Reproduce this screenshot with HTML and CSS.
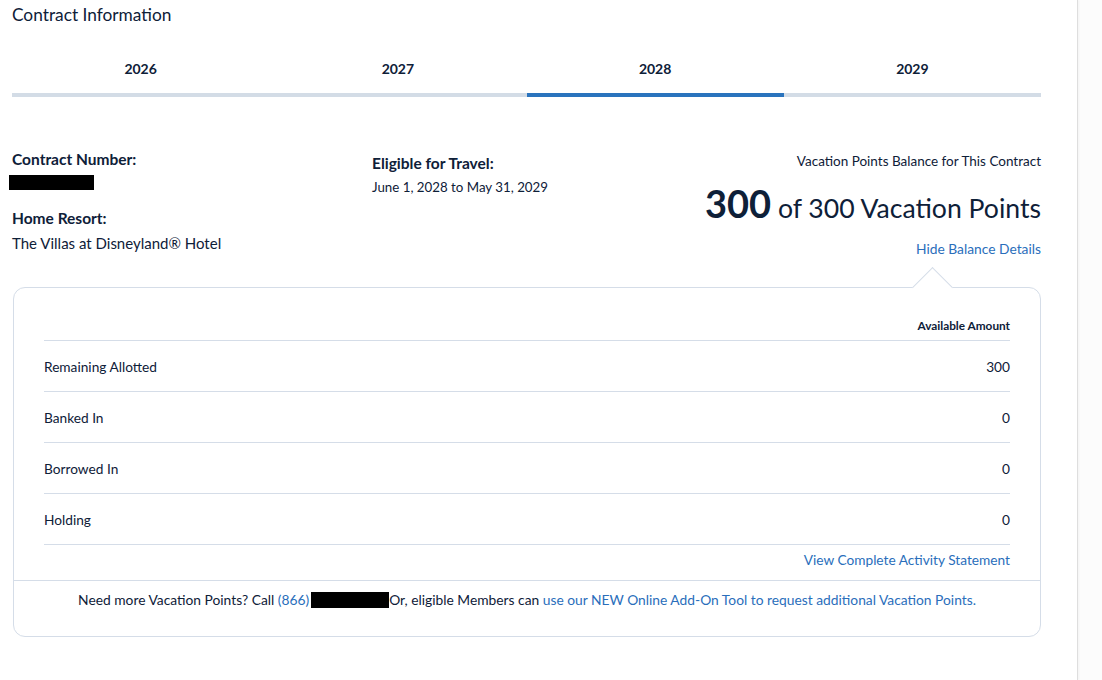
FILE: index.html
```html
<!DOCTYPE html>
<html lang="en">
<head>
<meta charset="utf-8">
<title>Contract Information</title>
<link rel="stylesheet" href="styles.css">
</head>
<body>
<main class="page">
  <h1 class="page-title">Contract Information</h1>

  <nav class="year-tabs">
    <a class="year-tab" href="#">2026</a>
    <a class="year-tab" href="#">2027</a>
    <a class="year-tab is-active" href="#">2028</a>
    <a class="year-tab" href="#">2029</a>
  </nav>

  <section class="contract-summary">
    <div class="summary-col">
      <h2 class="field-label">Contract Number:</h2>
      <div class="redacted redacted-contract"></div>
      <h2 class="field-label field-label-spaced">Home Resort:</h2>
      <p class="field-value">The Villas at Disneyland® Hotel</p>
    </div>
    <div class="summary-col summary-col-travel">
      <h2 class="field-label">Eligible for Travel:</h2>
      <p class="field-value field-value-date">June 1, 2028 to May 31, 2029</p>
    </div>
    <div class="summary-col balance">
      <p class="balance-caption">Vacation Points Balance for This Contract</p>
      <p class="balance-total"><strong>300</strong> of 300 Vacation Points</p>
      <a class="link balance-toggle" href="#">Hide Balance Details</a>
    </div>
  </section>

  <section class="balance-panel">
    <div class="balance-table">
      <div class="balance-head">Available Amount</div>
      <div class="balance-row"><span>Remaining Allotted</span><span class="amount">300</span></div>
      <div class="balance-row"><span>Banked In</span><span class="amount">0</span></div>
      <div class="balance-row"><span>Borrowed In</span><span class="amount">0</span></div>
      <div class="balance-row"><span>Holding</span><span class="amount">0</span></div>
      <div class="statement-link"><a class="link" href="#">View Complete Activity Statement</a></div>
    </div>
    <p class="panel-footer">Need more Vacation Points? Call <a class="link" href="#">(866)</a><span class="redacted redacted-phone"></span>Or, eligible Members can <a class="link" href="#">use our NEW Online Add-On Tool to request additional Vacation Points.</a></p>
  </section>
</main>
</body>
</html>
```

FILE: styles.css
```css
* {
  box-sizing: border-box;
}

html, body {
  margin: 0;
  padding: 0;
}

body {
  background: #fcfcfc;
  font-family: Lato, "Noto Sans", sans-serif;
  color: #0e2038;
  font-size: 14px;
}

.page {
  width: 1078px;
  min-height: 680px;
  background: #fff;
  border-right: 1px solid #dedede;
  box-shadow: 1px 0 2px rgba(0, 0, 0, 0.04);
  padding: 0 36px 40px 12px;
}

.page-title {
  margin: 0;
  padding-top: 4px;
  font-size: 17.3px;
  font-weight: 400;
  line-height: 22px;
}

/* year selector */
.year-tabs {
  display: flex;
  margin-top: 33px;
}

.year-tab {
  flex: 1;
  text-align: center;
  font-weight: 700;
  font-size: 14px;
  line-height: 20px;
  color: #0e2038;
  text-decoration: none;
  padding-bottom: 14px;
  border-bottom: 4px solid #d3dce6;
}

.year-tab.is-active {
  border-bottom-color: #2a73bd;
}

/* contract summary */
.contract-summary {
  display: grid;
  grid-template-columns: 360px 1fr auto;
  margin-top: 52px;
}

.field-label {
  margin: 0;
  font-size: 15.5px;
  font-weight: 700;
  line-height: 20px;
}

.summary-col-travel {
  padding-top: 4px;
}

.field-label-spaced {
  margin-top: 18px;
}

.field-value {
  margin: 6px 0 0;
  font-size: 15px;
  line-height: 18px;
}

.field-value-date {
  margin-top: 5px;
  font-size: 13.3px;
}

.redacted {
  display: inline-block;
  background: #000;
  vertical-align: middle;
}

.redacted-contract {
  display: block;
  width: 85px;
  height: 15px;
  margin: 6px 0 0 -3px;
}

.redacted-phone {
  width: 78px;
  height: 16px;
  margin: -3px 0 0 2px;
}

.balance {
  text-align: right;
  padding-top: 3px;
}

.balance-caption {
  margin: 0;
  font-size: 13.5px;
  line-height: 18px;
}

.balance-total {
  margin: 15px 0 0;
  font-size: 26.6px;
  line-height: 36px;
}

.balance-total strong {
  font-size: 38px;
  font-weight: 700;
}

.link {
  color: #2a6ebb;
  text-decoration: none;
}

.balance-toggle {
  display: inline-block;
  margin-top: 14px;
  font-size: 13.8px;
  line-height: 18px;
}

/* balance details panel */
.balance-panel {
  position: relative;
  margin: 29px 0 0 1px;
  width: 1028px;
  border: 1px solid #d5dde8;
  border-radius: 12px;
}

.balance-panel::before {
  content: "";
  position: absolute;
  top: -15px;
  right: 93px;
  width: 28px;
  height: 28px;
  background: #fff;
  border-left: 1px solid #d5dde8;
  border-top: 1px solid #d5dde8;
  transform: rotate(45deg);
}

.balance-table {
  padding: 30px 30px 0;
}

.balance-head {
  text-align: right;
  font-size: 11.8px;
  font-weight: 700;
  line-height: 16px;
  padding-bottom: 6px;
  border-bottom: 1px solid #d5dde8;
}

.balance-row {
  display: flex;
  justify-content: space-between;
  align-items: center;
  height: 51px;
  font-size: 13.7px;
  border-bottom: 1px solid #d5dde8;
}

.statement-link {
  text-align: right;
  font-size: 13.7px;
  line-height: 18px;
  padding: 6px 0 11px;
}

.panel-footer {
  margin: 0;
  border-top: 1px solid #d5dde8;
  text-align: center;
  font-size: 13.8px;
  line-height: 18px;
  padding: 10px 0 27px;
}
```
